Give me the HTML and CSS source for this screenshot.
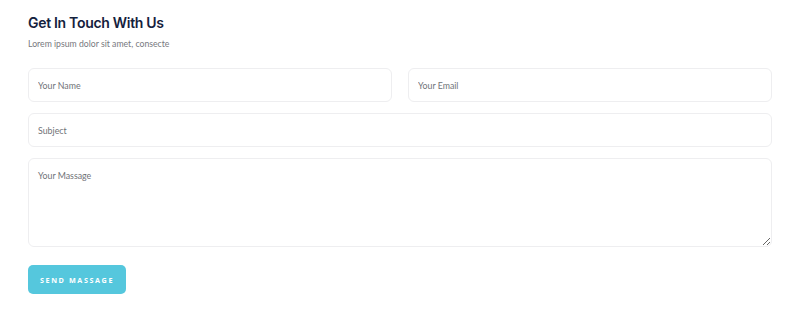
FILE: index.html
```html
<!DOCTYPE html>
<html>
<head>
  <title>Contact</title>
  <link rel="stylesheet" href="styles.css">
</head>
<body>
  <div class="contact">
    <h2>Get In Touch With Us</h2>
    <p class="lead">Lorem ipsum dolor sit amet, consecte</p>

    <form class="form">
      <div class="row">
        <input type="text" placeholder="Your Name">
        <input type="email" placeholder="Your Email">
      </div>
      <input type="text" placeholder="Subject">
      <textarea placeholder="Your Massage"></textarea>
      <button type="button">Send Massage</button>
    </form>
  </div>
</body>
</html>
```

FILE: styles.css
```css
body { margin: 0; background: #fff; font-family: Lato, "Open Sans", sans-serif; }
.contact { padding: 13px 28px 0 28px; }
h2 { margin: 0; font-family: Inter, "Noto Sans", sans-serif; font-size: 14px; font-weight: 600; color: #14213d; letter-spacing: -0.3px; line-height: 20px; }
.lead { margin: 5px 0 0 0; font-size: 8.7px; color: #77797e; line-height: 12px; }
.form { margin-top: 18px; display: flex; flex-direction: column; gap: 11px; align-items: flex-start; }
.row { display: flex; gap: 16px; width: 100%; }
input, textarea { box-sizing: border-box; width: 100%; height: 34px; padding: 0 9px; border: 1px solid #eeeef0; border-radius: 6px; font-family: inherit; font-size: 8.8px; color: #333; background: #fff; outline: none; }
textarea { height: 89px; padding-top: 11px; resize: vertical; }
input::placeholder, textarea::placeholder { color: #6f7277; }
button { margin-top: 7px; width: 98px; height: 29px; border: none; border-radius: 5px; background: #55c7dd; color: #fff; font-family: "Open Sans", sans-serif; font-size: 7.2px; font-weight: 700; letter-spacing: 1.6px; text-transform: uppercase; cursor: pointer; }
```
